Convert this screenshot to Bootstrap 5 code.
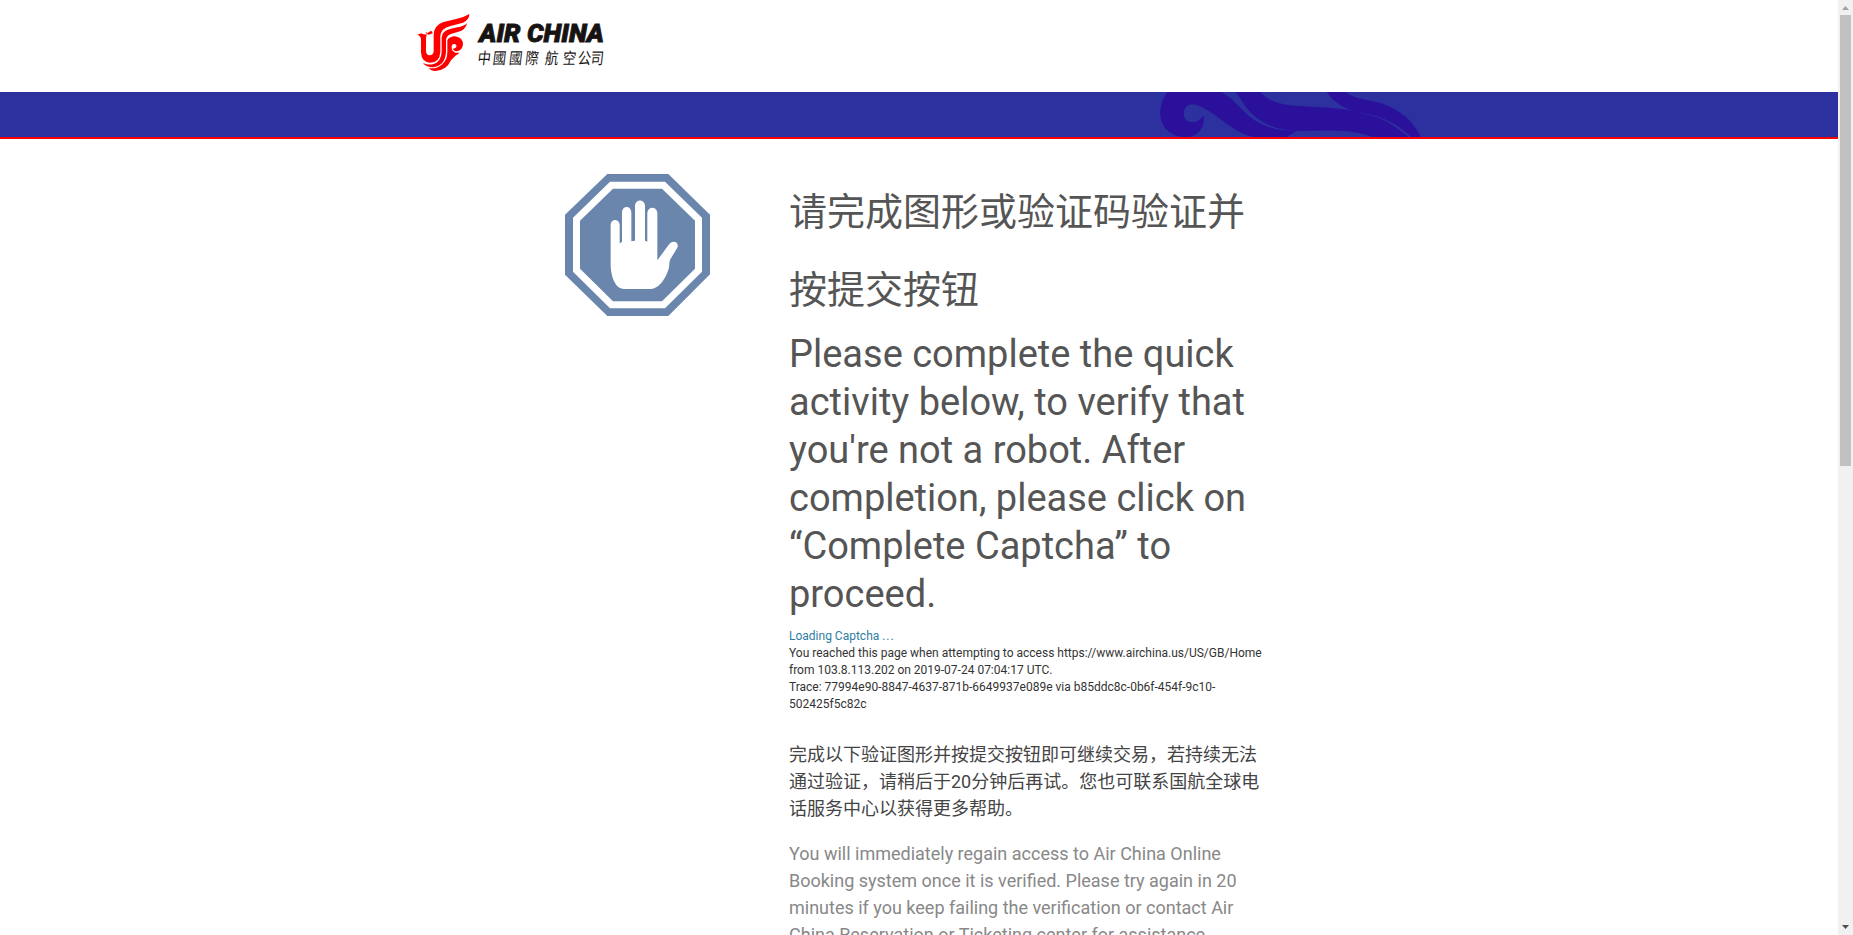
<!DOCTYPE html>
<html lang="zh-CN">
<head>
<meta charset="utf-8">
<title>Air China</title>
<link href="https://cdn.jsdelivr.net/npm/bootstrap@5.3.0/dist/css/bootstrap.min.css" rel="stylesheet">
<style>
body{font-family:Roboto,"Noto Sans CJK SC",sans-serif;color:#333;background:#fff}
.page-head{height:92px;padding:5px 0 0 410px}
.banner{height:47px;background:#2d309f;border-bottom:2px solid #f00;padding-left:1140px}
.content-grid{padding:35px 0 0 565px;gap:79px}
.message{width:476px;margin-top:-1px}
.title-cn{font-size:38px;line-height:78px;color:#555;margin:0}
.title-en{font-size:38px;line-height:48px;color:#555;margin:1px 0 0}
.details{font-size:12px;line-height:17px;margin-top:10px}
.loading{color:#2e7d9f}
.loading-dots{letter-spacing:.9px}
.note-cn{font-size:18px;line-height:27px;color:#444;margin:28px 0 0}
.note-en{font-size:18px;line-height:27px;color:#888;margin:18px 0 0}
.scroll-track{width:15px;background:#f1f1f1}
.scroll-arrow{height:15px}
.scroll-thumb{width:11px;height:451px;background:#c1c1c1}
</style>
</head>
<body class="vh-100 overflow-hidden">
<div class="d-flex vh-100 overflow-hidden">
  <div class="flex-grow-1 overflow-hidden">
    <header class="page-head">
      <svg class="d-block" width="200" height="75" viewBox="0 0 600 225" role="img" aria-label="Air China">
        <g fill="#f00" transform="translate(4 9)">
          <path d="M15 78Q23 80 29 76Q34 80 47 79Q45 84 44 90V130Q45 142 55 142Q66 142 67 130V82Q67 53 94 43L137 32Q160 27 174 18Q174 35 155 44L118 54Q88 61 87 85V132Q85 164 56 164Q30 162 29 133V93Q27 82 15 78Z"/>
          <path d="M42 72L49 75L58 69Q64 69 64 76L53 80Q46 80 42 72Z"/>
          <path d="M167 46Q164 66 139 72L121 77Q104 82 104 97V132Q101 174 65 178Q45 178 35 165Q48 171 64 169Q90 162 91 131V88Q93 68 116 63L138 58Q157 55 167 46Z"/>
          <path d="M108 96Q119 82 137 86Q155 91 155 109Q153 128 137 130Q128 130 124 122Q132 122 135 117Q137 111 131 108Q122 106 121 115Q119 129 132 134L145 134Q130 143 119 157Q105 188 72 189Q59 189 52 180Q75 184 91 170Q108 158 108 132Z"/>
        </g>
        <text x="208" y="111" font-family="Roboto" font-size="75" font-weight="900" font-style="italic" fill="#171313" stroke="#171313" stroke-width="2.5" textLength="374" lengthAdjust="spacingAndGlyphs">AIR CHINA</text>
        <text transform="translate(202 177) scale(.83 1) skewX(-8)" x="-1 54 113 171 243 307 361 407" font-family="Noto Sans CJK TC" font-size="48" fill="#171313">中國國際航空公司</text>
      </svg>
    </header>
    <div class="banner">
      <svg class="d-block" width="300" height="45" viewBox="0 21 900 135" fill="#2a109b" aria-hidden="true">
        <path d="M82 21H244C292 47 313 94 364 117C397 133 429 137 470 137L440 156H338C285 141 250 106 210 80C184 64 161 51 145 61C128 70 128 94 139 106C158 119 182 108 190 91C198 124 173 154 145 156H122C73 145 48 104 67 50Q72 33 82 21Z"/>
        <path d="M285 21H361C397 59 442 62 508 65C566 68 607 69 637 78L696 92C740 103 766 125 806 156H696C641 131 558 136 475 138C419 135 382 124 346 95C311 67 306 40 285 21Z"/>
        <path d="M560 21H616C650 45 690 44 728 56C783 77 818 105 843 156H813C773 117 733 98 692 89L637 78C602 65 577 45 560 21Z"/>
      </svg>
    </div>
    <main class="content-grid d-flex align-items-start">
      <svg class="flex-shrink-0" width="145" height="142" viewBox="30 27 435 426" role="img" aria-label="Stop">
        <path fill="#6a86ad" d="M157 27H340L465 149V328L340 453H157L30 329V149Z"/>
        <path fill="#fff" d="M165 50H330L441 158V320L330 430H165L54 320V158Z"/>
        <path fill="#6a86ad" d="M174 71H321L420 167V311L321 409H174L75 311V167Z"/>
        <path fill="#fff" d="M167 180C167 161 193 160 194 180V235L201 231V142C202 121 228 121 229 142V229L240 227V121C242 102 268 102 270 121V227L277 230V143C279 123 305 123 307 143V286L340 241C352 222 374 231 367 248L346 283C341 294 345 306 338 320C327 348 310 371 285 372H207C180 371 168 335 167 300Z"/>
      </svg>
      <div class="message">
        <h1 class="title-cn fw-normal">请完成图形或验证码验证并按提交按钮</h1>
        <h2 class="title-en fw-normal">Please complete the quick activity below, to verify that you're not a robot. After completion, please click on “Complete Captcha” to proceed.</h2>
        <div class="details">
          <div class="loading">Loading Captcha <span class="loading-dots">...</span></div>
          <div>You reached this page when attempting to access https://www.airchina.us/US/GB/Home from 103.8.113.202 on 2019-07-24 07:04:17 UTC.</div>
          <div>Trace: 77994e90-8847-4637-871b-6649937e089e via b85ddc8c-0b6f-454f-9c10-502425f5c82c</div>
        </div>
        <p class="note-cn">完成以下验证图形并按提交按钮即可继续交易，若持续无法通过验证，请稍后于20分钟后再试。您也可联系国航全球电话服务中心以获得更多帮助。</p>
        <p class="note-en">You will immediately regain access to Air China Online Booking system once it is verified. Please try again in 20 minutes if you keep failing the verification or contact Air China Reservation or Ticketing center for assistance.</p>
      </div>
    </main>
  </div>
  <div class="scroll-track flex-shrink-0 d-flex flex-column align-items-center" aria-hidden="true">
    <svg class="scroll-arrow d-block" width="15" height="15"><path d="M4 10H11L7.5 6Z" fill="#a3a3a3"/></svg>
    <div class="scroll-thumb"></div>
    <svg class="scroll-arrow d-block mt-auto" width="15" height="15"><path d="M4 5H11L7.5 9Z" fill="#505050"/></svg>
  </div>
</div>
<script src="https://cdn.jsdelivr.net/npm/bootstrap@5.3.0/dist/js/bootstrap.bundle.min.js"></script>
</body>
</html>
